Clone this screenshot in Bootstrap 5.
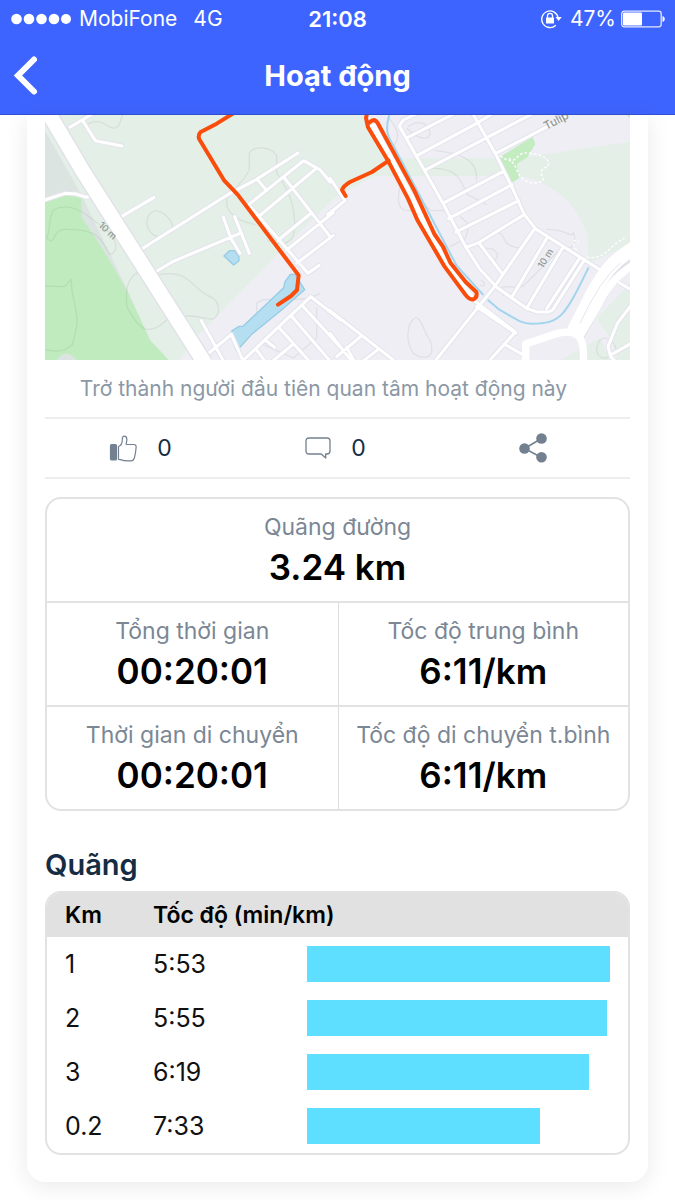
<!DOCTYPE html>
<html lang="vi">
<head>
<meta charset="utf-8">
<meta name="viewport" content="width=device-width, initial-scale=1">
<title>Hoạt động</title>
<link href="https://cdn.jsdelivr.net/npm/bootstrap@5.3.0/dist/css/bootstrap.min.css" rel="stylesheet">
<style>
  body { font-family: Inter, "Noto Sans", sans-serif; font-size: 24px; line-height: 32px; color: #111; background: #fff; }
  .app-header { background: #3e64ff; border-bottom: 1px solid #3152d6; color: #fff; }
  .status-bar { height: 37px; font-size: 21px; padding: 0 10px; }
  .status-side { flex: 1 1 0; }
  .clock { font-size: 22px; }
  .signal { width: 61px; height: 12px; }
  .title-bar { height: 77px; }
  .title-bar h1 { font-size: 29px; line-height: 36px; font-weight: 700; }
  .back-btn { width: 54px; color: #fff; border: 0; }
  .page { padding: 0 27px 18px; }
  .activity { padding: 0 18px 27px; border-radius: 0 0 18px 18px; box-shadow: 0 4px 24px rgba(0,0,0,.09); background: #fff; }
  .caption { color: #8b98a5; font-size: 21px; padding: 13px 28px 12px 0; }
  .actions { border-top: 2px solid #eee; border-bottom: 2px solid #eee; }
  .action-btn { height: 58px; color: #142c44; font-size: 23px; gap: 20px; border: 0; padding: 0 4px 0 0; }
  .icon { color: #73808f; }
  .stats { margin-top: 18px; border: 2px solid #e2e2e2; border-radius: 16px; }
  .stat { height: 102px; padding-top: 12px; text-align: center; }
  .stat dt { font-size: 23px; font-weight: 400; color: #7b8795; }
  .stat dd { font-size: 35px; line-height: 48px; font-weight: 600; color: #000; margin: 0; }
  .stat-row { border-top: 2px solid #e2e2e2; }
  .stat-row .stat + .stat { border-left: 1px solid #dcdcdc; }
  .section-title { font-size: 29px; line-height: 36px; font-weight: 600; color: #142c44; margin: 36px 0 8px; }
  .splits-box { border: 2px solid #e2e2e2; border-radius: 16px; overflow: hidden; }
  .splits { width: 100%; table-layout: fixed; font-size: 25px; }
  .splits th { height: 44px; background: #e1e1e1; font-size: 23px; font-weight: 600; color: #000; padding: 0 0 0 10px; }
  .splits td { height: 54px; padding: 0 0 0 10px; }
  .splits th:first-child, .splits td:first-child { padding-left: 18px; }
  .splits td.bar-cell { padding: 0 18px 0 0; }
  .col-km { width: 96px; }
  .col-pace { width: 164px; }
  .pace-bar { height: 36px; background: #5edfff; }
</style>
</head>
<body>
<header class="app-header">
  <div class="status-bar d-flex align-items-center">
    <div class="status-side d-flex align-items-center">
      <svg class="signal me-2" viewBox="0 0 61 12" fill="#fff" aria-hidden="true"><circle cx="6.500" cy="6" r="5.300"/><circle cx="19" cy="6" r="5.300"/><circle cx="31.500" cy="6" r="5.300"/><circle cx="44" cy="6" r="5.300"/><circle cx="56" cy="6" r="5"/></svg>
      <span>MobiFone</span><span class="ms-3">4G</span>
    </div>
    <span class="clock fw-semibold">21:08</span>
    <div class="status-side d-flex align-items-center justify-content-end">
      <svg width="22" height="20" viewBox="0 0 22 20" fill="none" stroke="#fff" stroke-width="1.300" class="me-2" aria-hidden="true"><path d="M15.800 16.200A8.300 8.300 0 1 1 18.200 9"/><path d="M15.500 8h6.200l-3.100 4z" fill="#fff" stroke="none"/><rect x="6" y="8.500" width="8" height="6" rx=".6" fill="#fff" stroke="none"/><path d="M7.500 9V6.800a2.500 2.500 0 0 1 5 0V9"/></svg>
      <span class="me-1">47%</span>
      <svg width="45" height="18" viewBox="0 0 45 18" fill="#fff" aria-hidden="true"><rect x="1.700" y="1.200" width="39.500" height="15.600" rx="2.500" fill="none" stroke="#fff" stroke-opacity=".85" stroke-width="1.300"/><rect x="3" y="2.500" width="19" height="13" rx="1"/><path d="M42.500 6v6c3-.8 3-5.200 0-6z"/></svg>
    </div>
  </div>
  <div class="title-bar d-flex align-items-center">
    <button type="button" class="back-btn btn p-0" aria-label="Quay lại">
      <svg width="28" height="42" viewBox="0 0 28 42" fill="none" stroke="#fff" stroke-width="6" stroke-linecap="round" stroke-linejoin="miter" aria-hidden="true"><path d="M21 4.500 5 20.500l16 16"/></svg>
    </button>
    <h1 class="flex-fill text-center m-0">Hoạt động</h1>
    <span class="back-btn"></span>
  </div>
</header>

<main class="page">
  <article class="activity">
    <svg class="d-block w-100" viewBox="45 15 1755 735" role="img" aria-label="Bản đồ hoạt động">
      <defs>
        <g id="roads" fill="none" stroke-linejoin="round" stroke-linecap="round">
          <path d="M120 52 190 10M158 32l38 60 80 16M38 272l67-22 33 2 32 10 30-16M270 322l102-60M330 420 600 250 680 208 804 129M380 484l50-30 200-84M580 322l22 62 28 46M614 320l44 110M682 208l28 34M656 284l165-132 50 28 29 36M690 316l168-140M762 202l140 180M745 390l95-78M770 420l140-112M800 460l110-84M656 284 834 490l34-24M514 632l66 120M530 735l74-62 34 77M630 760 842 560l90 70M680 720l22 30M708 692l26 20M750 656l90 100M786 620l120 140M820 590l110 120M720 760l70-58"/>
          <g transform="translate(900)">
            <path d="M0 205l45 67-52 42M262 10l-42 20-12 18 76 134 54 96 70 134 42 66 50 54 40 28 52 36 30 10h34l12-6 96-152M422 0l76 134 48 98 36 80 34 44 195 124M230 84 375 10M262 136 440 40 490 10M286 180 560 36 620 5M498 130 710 20M338 280l182-96M356 326l190-102M378 366l188-94M408 412l38-14 136-84M446 398l70 92M614 356 492 532 310 760M652 382 544 564M700 410 592 592M748 446 650 596M430 570l126 96-76 84M440 590l118 80M522 702l60 34M0 602l190 148M92 680 20 740M0 670l70 90M50 712l26 48M145 718 90 760M868 518l40 24M908 580l-46 60-28 70 8 30 20 20M842 735l60-34"/>
          </g>
        </g>
      </defs>
      <path fill="#efeef5" d="M45 15h1755v735H45z"/>
      <path fill="#e4efe7" d="M45 15h965l65 130h340l96-7 289-43v310l-128 55c8-60 0-100-20-130-24-50-70-92-142-122l-40-10H1030l-120 70L740 436 510 670l-60 80H45zM1590 750l120-66 30 66zM1700 625l100-105v230h-40l-10-50z"/>
      <path fill="#dce4e1" d="M45 62 152 250l140 290 78 170 40 40H45z"/>
      <path fill="#c0ebbf" d="M45 272l65-17 44 7v58l60 90 76 130 70 150 56 60H45z"/>
      <path fill="#dce4e1" d="M80 750q28-38 60 0z"/>
      <path fill="#c3ecc1" d="M1408 142l100-62 8 22-24 40-32 20 8 42-22 14zM1790 15h10v10z"/>
      <g fill="none" stroke="#000" stroke-opacity=".06" stroke-width="4">
        <path d="M160 52c60-50 80 30 108-8l10-32M50 384c30 30 12-30 60-26 100 0 100 30 130 76 30-10 20-56-20-80-60-50-100-80-150-54-14 20-8 60-20 84zM350 340c6-60 60-40 78 6-10 44-66 50-78-6zM658 180v-50c10-26 76-20 82 10v48c40 60 60 110 52 180-6 40-50 38-80 22M658 180c-40 70-70 60-68 104 6 30 40 50 86 60M385 494c90-16 90 30 150 64 36 10 40 60 12 70-50-8-60-14-126-8-60 60-90 50-130-30-10-80 20-106 60-110M45 528l60 2 18-22 4 42c20 80 18 90 0 154-30 26-54 20-82 14M680 610v-30c30-30 120 10 190-30M700 704l90 40 70-60V592"/>
        <path d="M1072 20c40 40 34 70 20 84M1130 54c30 30 60 40 70 20 0-30-30-50-66-24M1215 122c100 10 130 40 124 90M1190 176c80-6 100 20 120 76l60 32M1110 230c10-10 30 0 42 20l50 52h50M1110 230c-16 70 10 76 44 70M1290 320c30 20 30 30 14 70M1260 410l40-20M1390 366c50 0 10 40 80 48M1550 358c70 0 70 30 80 10 16 40-10 50-50 60l-100 100c-40 14-80-20-60 30M1380 456c40-10 20-50-20-40M1352 510c20 10 10 24 0 14M1140 640c30-50 40 30 60 50 20 60-20 60-50 40-20-30-20-60-10-90zM1700 716c10-60 60-20 58 4-20 36-58 30-58-4M900 370q12 8 0 18"/>
      </g>
      <g fill="#b5def0" stroke="#96cce4" stroke-width="4" stroke-linejoin="round">
        <path d="M582 438l16-16h16l13 18v12l-16 13z"/>
        <path d="M605 663l22-14h12l122-116 4-18 16-22h14l29 46-73 64-86 70-40 44-8 1-3-24z"/>
      </g>
      <path d="M1078 15c-14 44-4 66 10 88l192 364 80 88M1373 569l35 30c45 25 65 42 95 42 90 0 100-20 173-169" fill="none" stroke="#a2d5ed" stroke-width="6"/>
      <use href="#roads" stroke="#e3e4ec" stroke-width="15"/>
      <use href="#roads" stroke="#fff" stroke-width="9"/>
      <path d="M50 0 160 186 525 760M1800 435c-50 40-60 60-90 112l-72 128" fill="none" stroke="#e0e1e9" stroke-width="52"/>
      <g fill="none" stroke="#fff">
        <path d="M50 0 160 186 525 760" stroke-width="44"/>
        <path d="M1810 415c-70 44-90 80-120 132l-66 130" stroke-width="42"/>
        <path d="M1810 464c-60 40-80 70-110 130l-54 90" stroke-width="22"/>
        <path d="M1487 760v-58l96-32c74-18 82 30 76 90" stroke-width="22" stroke-linejoin="round"/>
        <path d="M1410 138c60 40 40-20 92-8 40 4 60 20 52 40-30 10-20 20-14 40-30 20-60 4-76-20-8-30-24-36-28-50M1670 442c60 6 60-30 114-58M1640 420c-20-20-4-40 6-24" stroke-width="4" stroke-dasharray="8 6"/>
      </g>
      <path d="M1650 640q60-130 120-180" fill="none" stroke="#e5e5ed" stroke-width="3"/>
      <g fill="#8e9994" font-family="Inter, sans-serif" font-size="28" font-weight="500">
        <text transform="translate(204 348) rotate(43)">10 m</text>
        <text transform="translate(1538 476) rotate(-58)">10 m</text>
        <text transform="translate(1549 60) rotate(-28)" font-size="34">Tulip</text>
      </g>
      <path d="M1026 44q28 58 58 108l82 156 72 140 84 115" fill="none" stroke="#fff" stroke-width="20"/>
      <g fill="none" stroke="#fa4c0b" stroke-width="12" stroke-linecap="round" stroke-linejoin="round">
        <path d="M610 10 560 41l-48 25q-8 7-5 20l76 126 40 42 183 242-5 44-18 18-39 26"/>
        <path d="M1011 10l-3 14 6 28 60 100 60 114 28 64 82 140 62 84q13 17 25 14 12-6 8-22l-32-30-46-58-22-48-26-38-60-130-110-203q-8-12-17-7l-12 8"/>
        <path d="M1076 152l-50 34-66 30q-20 12-24 24l11 18"/>
      </g>
    </svg>

    <p class="caption text-center m-0">Trở thành người đầu tiên quan tâm hoạt động này</p>

    <div class="actions row g-0">
      <div class="col-4"><button type="button" class="action-btn btn w-100 d-flex align-items-center justify-content-center" aria-label="Thích 0">
        <svg class="icon" width="28" height="28" viewBox="0 0 28 28" fill="none" stroke="currentColor" stroke-width="1.200" stroke-linejoin="round" aria-hidden="true"><rect x="1.500" y="10.500" width="6" height="15.500" rx="1.300" fill="currentColor"/><path d="M9.500 12.500c2.500-.8 3.800-3.500 3.800-7 0-2.300.7-3.500 2.200-3.300 2 .2 2.500 2.200 2.300 4.300-.1 1.500-.8 3-.6 4h7.600c1.800 0 2.500 1.400 2.300 3-.3 4.500-1 8-1.800 10.800-.5 1.600-1.400 2.300-3 2.500-4 .4-8.300-.1-10.800-1.200l-2-.3z"/></svg>
        <span>0</span></button></div>
      <div class="col-4"><button type="button" class="action-btn btn w-100 d-flex align-items-center justify-content-center" aria-label="Bình luận 0">
        <svg class="icon" width="26" height="24" viewBox="0 0 26 24" fill="none" stroke="currentColor" stroke-width="1.300" stroke-linejoin="round" aria-hidden="true"><path d="M4 2h18q3 0 3 3v10q0 3-3 3h-1.300v4l-4.500-4H4q-3 0-3-3V5q0-3 3-3z"/></svg>
        <span>0</span></button></div>
      <div class="col-4"><button type="button" class="action-btn btn w-100 p-0 d-flex align-items-center justify-content-center" aria-label="Chia sẻ">
        <svg class="icon" width="28" height="30" viewBox="0 0 28 30" fill="currentColor" aria-hidden="true"><path d="M22.500 5.500 5.500 15.500l17 9" fill="none" stroke="currentColor" stroke-width="1.600"/><circle cx="22.500" cy="5.500" r="5.300"/><circle cx="5.500" cy="15.500" r="5.300"/><circle cx="22.500" cy="24.200" r="5.300"/></svg></button></div>
    </div>

    <dl class="stats mb-0">
      <div class="stat"><dt>Quãng đường</dt><dd>3.24 km</dd></div>
      <div class="stat-row row g-0">
        <div class="stat col-6"><dt>Tổng thời gian</dt><dd>00:20:01</dd></div>
        <div class="stat col-6"><dt>Tốc độ trung bình</dt><dd>6:11/km</dd></div>
      </div>
      <div class="stat-row row g-0">
        <div class="stat col-6"><dt>Thời gian di chuyển</dt><dd>00:20:01</dd></div>
        <div class="stat col-6"><dt>Tốc độ di chuyển t.bình</dt><dd>6:11/km</dd></div>
      </div>
    </dl>

    <h2 class="section-title">Quãng</h2>
    <div class="splits-box">
      <table class="splits">
        <colgroup><col class="col-km"><col class="col-pace"><col></colgroup>
        <thead><tr><th scope="col">Km</th><th scope="col" colspan="2">Tốc độ (min/km)</th></tr></thead>
        <tbody>
          <tr><td>1</td><td>5:53</td><td class="bar-cell"><div class="pace-bar" style="width:100%"></div></td></tr>
          <tr><td>2</td><td>5:55</td><td class="bar-cell"><div class="pace-bar" style="width:99%"></div></td></tr>
          <tr><td>3</td><td>6:19</td><td class="bar-cell"><div class="pace-bar" style="width:93%"></div></td></tr>
          <tr><td>0.2</td><td>7:33</td><td class="bar-cell"><div class="pace-bar" style="width:77%"></div></td></tr>
        </tbody>
      </table>
    </div>
  </article>
</main>
<script src="https://cdn.jsdelivr.net/npm/bootstrap@5.3.0/dist/js/bootstrap.bundle.min.js"></script>
</body>
</html>
